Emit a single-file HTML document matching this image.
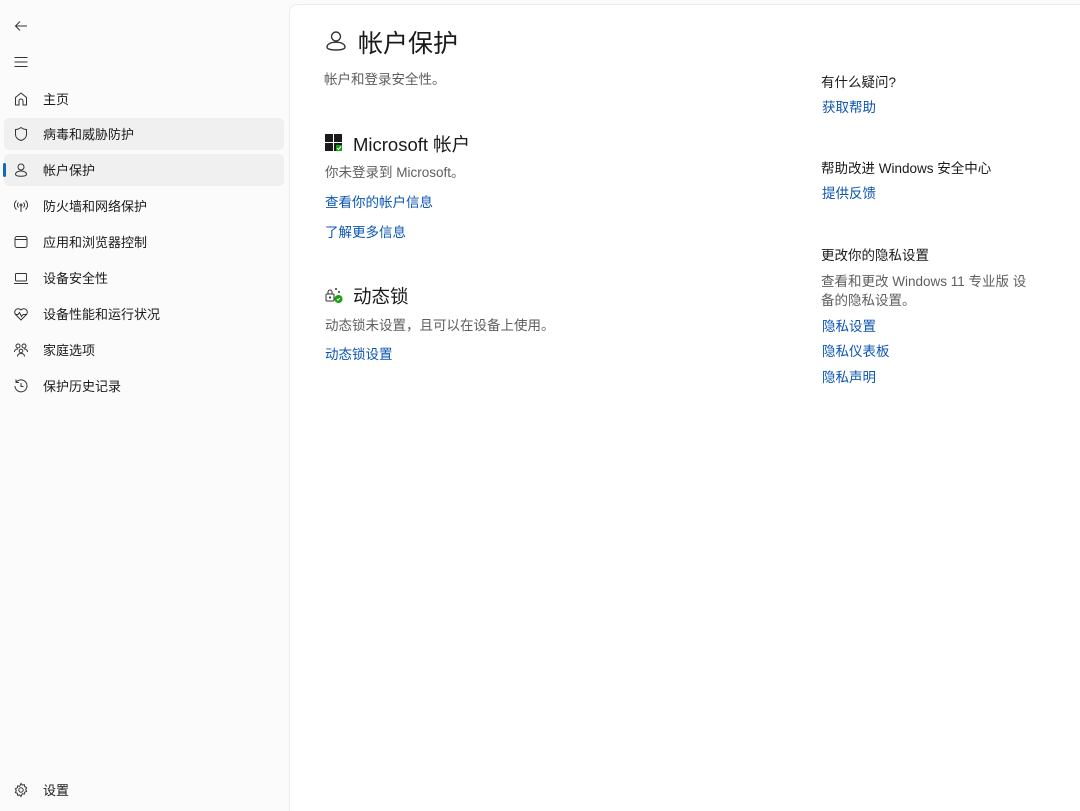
<!DOCTYPE html>
<html><head><meta charset="utf-8">
<style>
*{margin:0;padding:0;box-sizing:border-box}
html,body{width:1080px;height:811px;overflow:hidden;background:#fbfbfb;font-family:"Liberation Sans","Noto Sans CJK SC",sans-serif;color:#1a1a1a}
.side{position:absolute;left:0;top:0;width:289px;height:811px}
.nav{position:absolute;left:4px;width:280px;height:32px;border-radius:5px;font-size:13px}
.nav span{position:absolute;left:39px;top:6px}
.nav svg{position:absolute;left:9px;top:8px}
.sel{background:#f0f0f0}
.bar{position:absolute;left:-1px;top:9px;width:3px;height:14px;background:#0f6cbd;border-radius:2px}
.main{position:absolute;left:289px;top:4px;width:800px;height:807px;background:#fff;border:1px solid #ebebeb;border-bottom:none;border-top-left-radius:8px}
.t{position:absolute;white-space:nowrap}
.a{color:#0b55b4;font-size:13.5px}
.g{color:#5e5e5e;font-size:13.5px}
svg{fill:none;stroke:#333;stroke-width:1}
</style></head><body>
<div class="side">
<svg style="position:absolute;left:13px;top:18px" width="16" height="16" viewBox="0 0 16 16"><path d="M14 8H2.5M7 3.5L2.5 8 7 12.5"/></svg>
<svg style="position:absolute;left:13px;top:54px" width="16" height="16" viewBox="0 0 16 16"><path d="M1.5 3.5h13M1.5 8h13M1.5 12.5h13"/></svg>

<div class="nav" style="top:83px"><svg width="16" height="16" viewBox="0 0 16 16"><path d="M2.5 14V6.5L8 2l5.5 4.5V14h-3.5V10a2 2 0 0 0-4 0v4z"/></svg><span>主页</span></div>
<div class="nav sel" style="top:118px"><svg width="16" height="16" viewBox="0 0 16 16"><path d="M8 1.5c2 1.5 3.8 2 5.5 2v5c0 3-2.5 5-5.5 6-3-1-5.5-3-5.5-6v-5c1.7 0 3.5-.5 5.5-2z"/></svg><span>病毒和威胁防护</span></div>
<div class="nav sel" style="top:154px"><div class="bar"></div><svg width="16" height="16" viewBox="0 0 16 16"><circle cx="8" cy="5" r="3"/><path d="M2.5 12.3c0-2 2.3-3.3 5.5-3.3s5.5 1.3 5.5 3.3c0 1.3-2.4 2-5.5 2s-5.5-.7-5.5-2z"/></svg><span>帐户保护</span></div>
<div class="nav" style="top:190px"><svg width="16" height="16" viewBox="0 0 16 16"><circle cx="8" cy="7" r="1"/><path d="M8 8v6M5.5 4.5a3.5 3.5 0 0 0 0 5M10.5 4.5a3.5 3.5 0 0 1 0 5M3.5 2.5a6 6 0 0 0 0 9M12.5 2.5a6 6 0 0 1 0 9"/></svg><span>防火墙和网络保护</span></div>
<div class="nav" style="top:226px"><svg width="16" height="16" viewBox="0 0 16 16"><rect x="2" y="2.5" width="12" height="11" rx="2"/><path d="M2 5.5h12"/></svg><span>应用和浏览器控制</span></div>
<div class="nav" style="top:262px"><svg width="16" height="16" viewBox="0 0 16 16"><rect x="2.5" y="3.5" width="11" height="7.5" rx="1"/><path d="M1 13.5h14"/></svg><span>设备安全性</span></div>
<div class="nav" style="top:298px"><svg width="16" height="16" viewBox="0 0 16 16"><path d="M8 14L2.5 8.5A3.2 3.2 0 0 1 8 4a3.2 3.2 0 0 1 5.5 4.5z"/><path d="M2 8.5h3l1.5-2 2 4 1.5-2h4"/></svg><span>设备性能和运行状况</span></div>
<div class="nav" style="top:334px"><svg width="16" height="16" viewBox="0 0 16 16"><circle cx="5" cy="4" r="2"/><circle cx="11" cy="4" r="2"/><circle cx="8" cy="9" r="1.8"/><path d="M1.5 10c0-2 1.5-3 3.5-3M14.5 10c0-2-1.5-3-3.5-3M4.5 14.5c0-2 1.5-3 3.5-3s3.5 1 3.5 3"/></svg><span>家庭选项</span></div>
<div class="nav" style="top:370px"><svg width="16" height="16" viewBox="0 0 16 16"><path d="M3 4.5A6 6 0 1 1 2 8M3 1.5v3h3M8 5v3.5h2.5"/></svg><span>保护历史记录</span></div>

<div class="nav" style="top:774px"><svg width="16" height="16" viewBox="0 0 16 16"><circle cx="8" cy="8" r="2.2"/><path d="M8 1.5l1.3 1.6 2-.5.4 2 1.9.9-.9 1.9.9 1.9-1.9.9-.4 2-2-.5L8 14.5l-1.3-1.6-2 .5-.4-2-1.9-.9.9-1.9-.9-1.9 1.9-.9.4-2 2 .5z"/></svg><span>设置</span></div>
</div>

<div class="main"></div>

<svg style="position:absolute;left:324px;top:29px" width="24" height="24" viewBox="0 0 24 24"><circle cx="12" cy="7.5" r="4.5" stroke-width="1.4"/><path stroke-width="1.4" d="M3 18c0-3 4-4.8 9-4.8s9 1.8 9 4.8c0 2-4 3-9 3s-9-1-9-3z" /></svg>
<div class="t" style="left:358px;top:24px;font-size:25px">帐户保护</div>
<div class="t g" style="left:324px;top:68px">帐户和登录安全性。</div>

<svg style="position:absolute;left:325px;top:134px;stroke:none" width="18" height="18" viewBox="0 0 18 18"><rect x="0" y="0" width="8" height="8" fill="#1a1a1a"/><rect x="9" y="0" width="8" height="8" fill="#1a1a1a"/><rect x="0" y="9" width="8" height="8" fill="#1a1a1a"/><rect x="9" y="9" width="8" height="8" fill="#1a1a1a"/><rect x="11" y="11" width="6" height="6" fill="#13a10e"/><path d="M12 14l1.5 1.5 2.5-3" stroke="#fff" stroke-width="1" fill="none"/></svg>
<div class="t" style="left:353px;top:131px;font-size:18.5px">Microsoft 帐户</div>
<div class="t g" style="left:325px;top:161px">你未登录到 Microsoft。</div>
<div class="t a" style="left:325px;top:191px">查看你的帐户信息</div>
<div class="t a" style="left:325px;top:221px">了解更多信息</div>

<svg style="position:absolute;left:325px;top:286px" width="18" height="18" viewBox="0 0 18 18"><rect x="1" y="8" width="8" height="7" rx="1"/><path d="M3 8V6a2 2 0 0 1 4 0v2"/><circle cx="5" cy="11.5" r=".6" fill="#333"/><path d="M11 2v2M10 3h2M14 5v2M13 6h2"/><circle cx="13.5" cy="13" r="4" fill="#13a10e" stroke="none"/><path d="M11.8 13l1.2 1.2 2-2.2" stroke="#fff"/></svg>
<div class="t" style="left:353px;top:283px;font-size:18.5px">动态锁</div>
<div class="t g" style="left:325px;top:314px">动态锁未设置，且可以在设备上使用。</div>
<div class="t a" style="left:325px;top:343px">动态锁设置</div>

<div class="t" style="left:821px;top:71px;font-size:13.5px">有什么疑问?</div>
<div class="t a" style="left:822px;top:96px">获取帮助</div>
<div class="t" style="left:821px;top:157px;font-size:13.5px">帮助改进 Windows 安全中心</div>
<div class="t a" style="left:822px;top:182px">提供反馈</div>
<div class="t" style="left:821px;top:244px;font-size:13.5px">更改你的隐私设置</div>
<div class="t g" style="left:821px;top:272px;line-height:19px">查看和更改 Windows 11 专业版 设<br>备的隐私设置。</div>
<div class="t a" style="left:822px;top:315px">隐私设置</div>
<div class="t a" style="left:822px;top:340px">隐私仪表板</div>
<div class="t a" style="left:822px;top:366px">隐私声明</div>
</body></html>
